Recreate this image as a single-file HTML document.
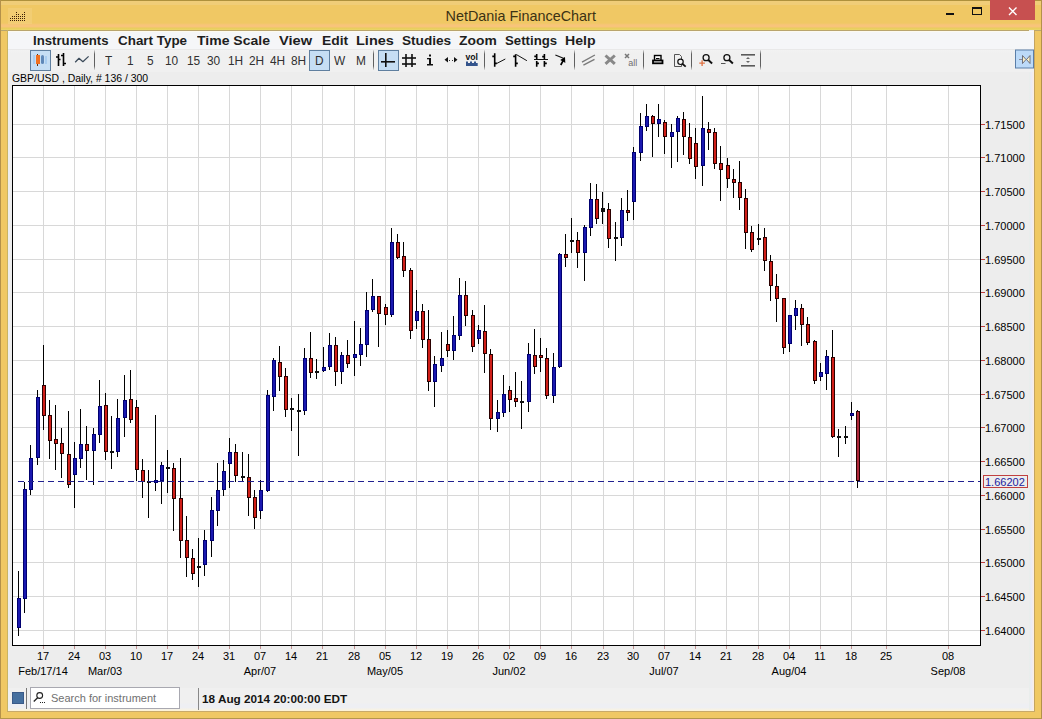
<!DOCTYPE html>
<html><head><meta charset="utf-8">
<style>
html,body{margin:0;padding:0;}
body{width:1042px;height:719px;position:relative;overflow:hidden;background:#f0c864;font-family:"Liberation Sans", sans-serif;}
.abs{position:absolute;}
#client{position:absolute;left:8px;top:31px;width:1026px;height:680px;background:#ededed;}
#menubar{position:absolute;left:8px;top:31px;width:1026px;height:18px;background:#f5f6f8;}
#toolbar{position:absolute;left:8px;top:49px;width:1026px;height:23px;background:linear-gradient(to bottom,#e9e9e9 0px,#e9e9e9 1px,#f2f2f2 1px,#f0f0f0 4px);}
.menu{position:absolute;top:33px;font-weight:bold;font-size:13.3px;line-height:15px;color:#1e1e1e;white-space:nowrap;transform-origin:0 0;}
.tb{position:absolute;top:52.5px;font-size:13.2px;line-height:15px;color:#303030;white-space:nowrap;transform:scaleX(0.9);transform-origin:0 0;}
.yl{position:absolute;left:985px;font-size:11px;color:#000;white-space:nowrap;line-height:14px;}
.xl{position:absolute;top:649px;width:40px;text-align:center;font-size:11px;color:#000;line-height:14px;}
.xl2{position:absolute;top:664px;width:80px;text-align:center;font-size:11px;color:#000;line-height:14px;}
svg{position:absolute;left:0;top:0;}
</style></head><body>
<div class="abs" style="left:0;top:0;width:1042px;height:31px;background:linear-gradient(to bottom,#af913c 0px,#af913c 1px,#f0cd78 1px,#f0cd78 5px,#f0c864 5px,#f0c864 23px,#f8c47a 25px,#f8c47a 27px,#e8cc5a 28px,#ead66a 30px,#b9a56e 30px,#b9a56e 31px);"></div>
<div id="client"></div>
<div class="abs" style="left:0;top:0;width:1px;height:719px;background:#b4914a;"></div>
<div class="abs" style="left:1041px;top:0;width:1px;height:719px;background:#b4914a;"></div>
<div class="abs" style="left:0;top:718px;width:1042px;height:1px;background:#b4964c;"></div>
<div class="abs" style="left:7px;top:30px;width:1px;height:682px;background:#c8b464;"></div>
<div class="abs" style="left:1034px;top:30px;width:1px;height:682px;background:#c4a460;"></div>
<div class="abs" style="left:7px;top:711px;width:1028px;height:1px;background:#c8aa6a;"></div>
<div class="abs" style="left:8px;top:688px;width:1021px;height:22px;background:linear-gradient(to bottom,#f0f0f0 0px,#f0f0f0 15px,#eeeff3 16px,#eeeff3 20px,#f6f2e6 21px);"></div>
<div class="abs" style="left:8px;top:710px;width:1026px;height:1px;background:#fdf3d7;"></div>
<div class="abs" style="left:1029px;top:30px;width:5px;height:680px;background:linear-gradient(to right,#e8eeea,#ecebf5,#fdeee2);"></div>
<div id="menubar"></div>
<div id="toolbar"></div>
<div class="abs" style="left:8px;top:31px;width:1026px;height:1px;background:#fdfaf0;"></div>
<div class="abs" style="left:445.5px;top:8px;font-size:14.4px;line-height:17px;color:#3c3214;white-space:nowrap;">NetDania FinanceChart</div>
<div class="menu" style="left:33.30px;transform:scaleX(0.9932)">Instruments</div>
<div class="menu" style="left:117.70px;transform:scaleX(1.0090)">Chart Type</div>
<div class="menu" style="left:196.70px;transform:scaleX(1.0537)">Time Scale</div>
<div class="menu" style="left:279.30px;transform:scaleX(1.1000)">View</div>
<div class="menu" style="left:321.70px;transform:scaleX(1.0435)">Edit</div>
<div class="menu" style="left:356.30px;transform:scaleX(1.0903)">Lines</div>
<div class="menu" style="left:402.30px;transform:scaleX(1.0244)">Studies</div>
<div class="menu" style="left:458.70px;transform:scaleX(1.0424)">Zoom</div>
<div class="menu" style="left:504.90px;transform:scaleX(0.9940)">Settings</div>
<div class="menu" style="left:564.90px;transform:scaleX(1.0615)">Help</div>
<div class="abs" style="left:12px;top:72px;font-size:10.45px;line-height:13px;color:#000;white-space:nowrap;">GBP/USD , Daily, # 136 / 300</div>
<div class="abs" style="left:12px;top:86px;width:968px;height:559px;background:#fff;"></div>
<svg width="1042" height="719" shape-rendering="crispEdges">
<rect x="43" y="86" width="1" height="559" fill="#d8d8d8"/>
<rect x="74" y="86" width="1" height="559" fill="#d8d8d8"/>
<rect x="105" y="86" width="1" height="559" fill="#d8d8d8"/>
<rect x="136" y="86" width="1" height="559" fill="#d8d8d8"/>
<rect x="167" y="86" width="1" height="559" fill="#d8d8d8"/>
<rect x="198" y="86" width="1" height="559" fill="#d8d8d8"/>
<rect x="229" y="86" width="1" height="559" fill="#d8d8d8"/>
<rect x="260" y="86" width="1" height="559" fill="#d8d8d8"/>
<rect x="291" y="86" width="1" height="559" fill="#d8d8d8"/>
<rect x="322" y="86" width="1" height="559" fill="#d8d8d8"/>
<rect x="354" y="86" width="1" height="559" fill="#d8d8d8"/>
<rect x="385" y="86" width="1" height="559" fill="#d8d8d8"/>
<rect x="416" y="86" width="1" height="559" fill="#d8d8d8"/>
<rect x="447" y="86" width="1" height="559" fill="#d8d8d8"/>
<rect x="478" y="86" width="1" height="559" fill="#d8d8d8"/>
<rect x="509" y="86" width="1" height="559" fill="#d8d8d8"/>
<rect x="540" y="86" width="1" height="559" fill="#d8d8d8"/>
<rect x="571" y="86" width="1" height="559" fill="#d8d8d8"/>
<rect x="603" y="86" width="1" height="559" fill="#d8d8d8"/>
<rect x="633" y="86" width="1" height="559" fill="#d8d8d8"/>
<rect x="664" y="86" width="1" height="559" fill="#d8d8d8"/>
<rect x="695" y="86" width="1" height="559" fill="#d8d8d8"/>
<rect x="726" y="86" width="1" height="559" fill="#d8d8d8"/>
<rect x="758" y="86" width="1" height="559" fill="#d8d8d8"/>
<rect x="789" y="86" width="1" height="559" fill="#d8d8d8"/>
<rect x="820" y="86" width="1" height="559" fill="#d8d8d8"/>
<rect x="851" y="86" width="1" height="559" fill="#d8d8d8"/>
<rect x="886" y="86" width="1" height="559" fill="#d8d8d8"/>
<rect x="948" y="86" width="1" height="559" fill="#d8d8d8"/>
<rect x="13" y="124" width="967" height="1" fill="#d8d8d8"/>
<rect x="13" y="157" width="967" height="1" fill="#d8d8d8"/>
<rect x="13" y="191" width="967" height="1" fill="#d8d8d8"/>
<rect x="13" y="225" width="967" height="1" fill="#d8d8d8"/>
<rect x="13" y="259" width="967" height="1" fill="#d8d8d8"/>
<rect x="13" y="292" width="967" height="1" fill="#d8d8d8"/>
<rect x="13" y="326" width="967" height="1" fill="#d8d8d8"/>
<rect x="13" y="360" width="967" height="1" fill="#d8d8d8"/>
<rect x="13" y="394" width="967" height="1" fill="#d8d8d8"/>
<rect x="13" y="427" width="967" height="1" fill="#d8d8d8"/>
<rect x="13" y="461" width="967" height="1" fill="#d8d8d8"/>
<rect x="13" y="495" width="967" height="1" fill="#d8d8d8"/>
<rect x="13" y="529" width="967" height="1" fill="#d8d8d8"/>
<rect x="13" y="562" width="967" height="1" fill="#d8d8d8"/>
<rect x="13" y="596" width="967" height="1" fill="#d8d8d8"/>
<rect x="13" y="630" width="967" height="1" fill="#d8d8d8"/>
<rect x="18" y="571" width="1" height="65" fill="#000"/>
<rect x="17" y="598" width="4" height="30" fill="#000070"/>
<rect x="18" y="599" width="2" height="28" fill="#1a18b0"/>
<rect x="24" y="482" width="1" height="131" fill="#000"/>
<rect x="23" y="489" width="4" height="110" fill="#000070"/>
<rect x="24" y="490" width="2" height="108" fill="#1a18b0"/>
<rect x="30" y="445" width="1" height="50" fill="#000"/>
<rect x="29" y="458" width="4" height="32" fill="#000070"/>
<rect x="30" y="459" width="2" height="30" fill="#1a18b0"/>
<rect x="37" y="390" width="1" height="75" fill="#000"/>
<rect x="36" y="397" width="4" height="61" fill="#000070"/>
<rect x="37" y="398" width="2" height="59" fill="#1a18b0"/>
<rect x="43" y="345" width="1" height="85" fill="#000"/>
<rect x="42" y="385" width="4" height="31" fill="#2a0000"/>
<rect x="43" y="386" width="2" height="29" fill="#d01e18"/>
<rect x="49" y="400" width="1" height="59" fill="#000"/>
<rect x="48" y="415" width="4" height="26" fill="#2a0000"/>
<rect x="49" y="416" width="2" height="24" fill="#d01e18"/>
<rect x="55" y="405" width="1" height="65" fill="#000"/>
<rect x="54" y="439" width="4" height="5" fill="#2a0000"/>
<rect x="55" y="440" width="2" height="3" fill="#d01e18"/>
<rect x="61" y="428" width="1" height="50" fill="#000"/>
<rect x="60" y="443" width="4" height="11" fill="#2a0000"/>
<rect x="61" y="444" width="2" height="9" fill="#d01e18"/>
<rect x="68" y="411" width="1" height="77" fill="#000"/>
<rect x="67" y="454" width="4" height="31" fill="#2a0000"/>
<rect x="68" y="455" width="2" height="29" fill="#d01e18"/>
<rect x="74" y="442" width="1" height="66" fill="#000"/>
<rect x="73" y="458" width="4" height="17" fill="#000070"/>
<rect x="74" y="459" width="2" height="15" fill="#1a18b0"/>
<rect x="80" y="409" width="1" height="59" fill="#000"/>
<rect x="79" y="444" width="4" height="15" fill="#000070"/>
<rect x="80" y="445" width="2" height="13" fill="#1a18b0"/>
<rect x="86" y="426" width="1" height="54" fill="#000"/>
<rect x="85" y="444" width="4" height="7" fill="#2a0000"/>
<rect x="86" y="445" width="2" height="5" fill="#d01e18"/>
<rect x="93" y="428" width="1" height="57" fill="#000"/>
<rect x="92" y="434" width="4" height="17" fill="#000070"/>
<rect x="93" y="435" width="2" height="15" fill="#1a18b0"/>
<rect x="99" y="380" width="1" height="63" fill="#000"/>
<rect x="98" y="406" width="4" height="29" fill="#000070"/>
<rect x="99" y="407" width="2" height="27" fill="#1a18b0"/>
<rect x="105" y="393" width="1" height="67" fill="#000"/>
<rect x="104" y="405" width="4" height="47" fill="#2a0000"/>
<rect x="105" y="406" width="2" height="45" fill="#d01e18"/>
<rect x="111" y="416" width="1" height="53" fill="#000"/>
<rect x="110" y="451" width="4" height="2" fill="#101010"/>
<rect x="117" y="399" width="1" height="58" fill="#000"/>
<rect x="116" y="418" width="4" height="34" fill="#000070"/>
<rect x="117" y="419" width="2" height="32" fill="#1a18b0"/>
<rect x="124" y="375" width="1" height="62" fill="#000"/>
<rect x="123" y="400" width="4" height="18" fill="#000070"/>
<rect x="124" y="401" width="2" height="16" fill="#1a18b0"/>
<rect x="130" y="370" width="1" height="53" fill="#000"/>
<rect x="129" y="399" width="4" height="21" fill="#2a0000"/>
<rect x="130" y="400" width="2" height="19" fill="#d01e18"/>
<rect x="136" y="400" width="1" height="81" fill="#000"/>
<rect x="135" y="407" width="4" height="63" fill="#2a0000"/>
<rect x="136" y="408" width="2" height="61" fill="#d01e18"/>
<rect x="142" y="459" width="1" height="39" fill="#000"/>
<rect x="141" y="470" width="4" height="12" fill="#2a0000"/>
<rect x="142" y="471" width="2" height="10" fill="#d01e18"/>
<rect x="148" y="470" width="1" height="48" fill="#000"/>
<rect x="147" y="481" width="4" height="2" fill="#101010"/>
<rect x="155" y="415" width="1" height="76" fill="#000"/>
<rect x="154" y="480" width="4" height="3" fill="#000070"/>
<rect x="155" y="481" width="2" height="1" fill="#1a18b0"/>
<rect x="161" y="462" width="1" height="42" fill="#000"/>
<rect x="160" y="465" width="4" height="16" fill="#000070"/>
<rect x="161" y="466" width="2" height="14" fill="#1a18b0"/>
<rect x="167" y="450" width="1" height="43" fill="#000"/>
<rect x="166" y="467" width="4" height="2" fill="#101010"/>
<rect x="173" y="463" width="1" height="68" fill="#000"/>
<rect x="172" y="468" width="4" height="31" fill="#2a0000"/>
<rect x="173" y="469" width="2" height="29" fill="#d01e18"/>
<rect x="180" y="458" width="1" height="100" fill="#000"/>
<rect x="179" y="498" width="4" height="43" fill="#2a0000"/>
<rect x="180" y="499" width="2" height="41" fill="#d01e18"/>
<rect x="186" y="516" width="1" height="61" fill="#000"/>
<rect x="185" y="540" width="4" height="18" fill="#2a0000"/>
<rect x="186" y="541" width="2" height="16" fill="#d01e18"/>
<rect x="192" y="549" width="1" height="31" fill="#000"/>
<rect x="191" y="558" width="4" height="16" fill="#2a0000"/>
<rect x="192" y="559" width="2" height="14" fill="#d01e18"/>
<rect x="198" y="538" width="1" height="49" fill="#000"/>
<rect x="197" y="566" width="4" height="2" fill="#101010"/>
<rect x="204" y="530" width="1" height="46" fill="#000"/>
<rect x="203" y="540" width="4" height="25" fill="#000070"/>
<rect x="204" y="541" width="2" height="23" fill="#1a18b0"/>
<rect x="211" y="497" width="1" height="60" fill="#000"/>
<rect x="210" y="510" width="4" height="31" fill="#000070"/>
<rect x="211" y="511" width="2" height="29" fill="#1a18b0"/>
<rect x="217" y="463" width="1" height="63" fill="#000"/>
<rect x="216" y="490" width="4" height="21" fill="#000070"/>
<rect x="217" y="491" width="2" height="19" fill="#1a18b0"/>
<rect x="223" y="460" width="1" height="36" fill="#000"/>
<rect x="222" y="471" width="4" height="19" fill="#000070"/>
<rect x="223" y="472" width="2" height="17" fill="#1a18b0"/>
<rect x="229" y="438" width="1" height="50" fill="#000"/>
<rect x="228" y="452" width="4" height="12" fill="#000070"/>
<rect x="229" y="453" width="2" height="10" fill="#1a18b0"/>
<rect x="235" y="444" width="1" height="38" fill="#000"/>
<rect x="234" y="452" width="4" height="24" fill="#2a0000"/>
<rect x="235" y="453" width="2" height="22" fill="#d01e18"/>
<rect x="242" y="452" width="1" height="29" fill="#000"/>
<rect x="241" y="476" width="4" height="2" fill="#101010"/>
<rect x="248" y="454" width="1" height="62" fill="#000"/>
<rect x="247" y="477" width="4" height="21" fill="#2a0000"/>
<rect x="248" y="478" width="2" height="19" fill="#d01e18"/>
<rect x="254" y="490" width="1" height="39" fill="#000"/>
<rect x="253" y="497" width="4" height="21" fill="#2a0000"/>
<rect x="254" y="498" width="2" height="19" fill="#d01e18"/>
<rect x="260" y="480" width="1" height="39" fill="#000"/>
<rect x="259" y="490" width="4" height="21" fill="#000070"/>
<rect x="260" y="491" width="2" height="19" fill="#1a18b0"/>
<rect x="267" y="390" width="1" height="102" fill="#000"/>
<rect x="266" y="395" width="4" height="96" fill="#000070"/>
<rect x="267" y="396" width="2" height="94" fill="#1a18b0"/>
<rect x="273" y="358" width="1" height="53" fill="#000"/>
<rect x="272" y="360" width="4" height="37" fill="#000070"/>
<rect x="273" y="361" width="2" height="35" fill="#1a18b0"/>
<rect x="279" y="346" width="1" height="45" fill="#000"/>
<rect x="278" y="362" width="4" height="15" fill="#2a0000"/>
<rect x="279" y="363" width="2" height="13" fill="#d01e18"/>
<rect x="285" y="368" width="1" height="49" fill="#000"/>
<rect x="284" y="376" width="4" height="34" fill="#2a0000"/>
<rect x="285" y="377" width="2" height="32" fill="#d01e18"/>
<rect x="291" y="398" width="1" height="33" fill="#000"/>
<rect x="290" y="408" width="4" height="2" fill="#101010"/>
<rect x="298" y="394" width="1" height="62" fill="#000"/>
<rect x="297" y="410" width="4" height="2" fill="#101010"/>
<rect x="304" y="348" width="1" height="67" fill="#000"/>
<rect x="303" y="358" width="4" height="53" fill="#000070"/>
<rect x="304" y="359" width="2" height="51" fill="#1a18b0"/>
<rect x="310" y="332" width="1" height="46" fill="#000"/>
<rect x="309" y="358" width="4" height="15" fill="#2a0000"/>
<rect x="310" y="359" width="2" height="13" fill="#d01e18"/>
<rect x="316" y="359" width="1" height="20" fill="#000"/>
<rect x="315" y="371" width="4" height="2" fill="#101010"/>
<rect x="323" y="347" width="1" height="25" fill="#000"/>
<rect x="322" y="367" width="4" height="4" fill="#000070"/>
<rect x="323" y="368" width="2" height="2" fill="#1a18b0"/>
<rect x="329" y="333" width="1" height="37" fill="#000"/>
<rect x="328" y="345" width="4" height="22" fill="#000070"/>
<rect x="329" y="346" width="2" height="20" fill="#1a18b0"/>
<rect x="335" y="337" width="1" height="49" fill="#000"/>
<rect x="334" y="345" width="4" height="27" fill="#2a0000"/>
<rect x="335" y="346" width="2" height="25" fill="#d01e18"/>
<rect x="341" y="352" width="1" height="32" fill="#000"/>
<rect x="340" y="355" width="4" height="17" fill="#000070"/>
<rect x="341" y="356" width="2" height="15" fill="#1a18b0"/>
<rect x="347" y="340" width="1" height="28" fill="#000"/>
<rect x="346" y="355" width="4" height="9" fill="#2a0000"/>
<rect x="347" y="356" width="2" height="7" fill="#d01e18"/>
<rect x="354" y="321" width="1" height="55" fill="#000"/>
<rect x="353" y="354" width="4" height="4" fill="#000070"/>
<rect x="354" y="355" width="2" height="2" fill="#1a18b0"/>
<rect x="360" y="328" width="1" height="38" fill="#000"/>
<rect x="359" y="344" width="4" height="11" fill="#000070"/>
<rect x="360" y="345" width="2" height="9" fill="#1a18b0"/>
<rect x="366" y="292" width="1" height="65" fill="#000"/>
<rect x="365" y="310" width="4" height="35" fill="#000070"/>
<rect x="366" y="311" width="2" height="33" fill="#1a18b0"/>
<rect x="372" y="279" width="1" height="33" fill="#000"/>
<rect x="371" y="296" width="4" height="14" fill="#000070"/>
<rect x="372" y="297" width="2" height="12" fill="#1a18b0"/>
<rect x="378" y="296" width="1" height="51" fill="#000"/>
<rect x="377" y="296" width="4" height="18" fill="#2a0000"/>
<rect x="378" y="297" width="2" height="16" fill="#d01e18"/>
<rect x="385" y="304" width="1" height="21" fill="#000"/>
<rect x="384" y="307" width="4" height="8" fill="#2a0000"/>
<rect x="385" y="308" width="2" height="6" fill="#d01e18"/>
<rect x="391" y="228" width="1" height="89" fill="#000"/>
<rect x="390" y="242" width="4" height="73" fill="#000070"/>
<rect x="391" y="243" width="2" height="71" fill="#1a18b0"/>
<rect x="397" y="234" width="1" height="25" fill="#000"/>
<rect x="396" y="242" width="4" height="16" fill="#2a0000"/>
<rect x="397" y="243" width="2" height="14" fill="#d01e18"/>
<rect x="403" y="242" width="1" height="35" fill="#000"/>
<rect x="402" y="256" width="4" height="15" fill="#2a0000"/>
<rect x="403" y="257" width="2" height="13" fill="#d01e18"/>
<rect x="410" y="268" width="1" height="71" fill="#000"/>
<rect x="409" y="270" width="4" height="61" fill="#2a0000"/>
<rect x="410" y="271" width="2" height="59" fill="#d01e18"/>
<rect x="416" y="290" width="1" height="39" fill="#000"/>
<rect x="415" y="311" width="4" height="10" fill="#000070"/>
<rect x="416" y="312" width="2" height="8" fill="#1a18b0"/>
<rect x="422" y="304" width="1" height="44" fill="#000"/>
<rect x="421" y="311" width="4" height="29" fill="#2a0000"/>
<rect x="422" y="312" width="2" height="27" fill="#d01e18"/>
<rect x="428" y="310" width="1" height="81" fill="#000"/>
<rect x="427" y="339" width="4" height="43" fill="#2a0000"/>
<rect x="428" y="340" width="2" height="41" fill="#d01e18"/>
<rect x="434" y="356" width="1" height="51" fill="#000"/>
<rect x="433" y="364" width="4" height="18" fill="#000070"/>
<rect x="434" y="365" width="2" height="16" fill="#1a18b0"/>
<rect x="441" y="332" width="1" height="40" fill="#000"/>
<rect x="440" y="358" width="4" height="8" fill="#000070"/>
<rect x="441" y="359" width="2" height="6" fill="#1a18b0"/>
<rect x="447" y="330" width="1" height="27" fill="#000"/>
<rect x="446" y="344" width="4" height="7" fill="#2a0000"/>
<rect x="447" y="345" width="2" height="5" fill="#d01e18"/>
<rect x="453" y="316" width="1" height="44" fill="#000"/>
<rect x="452" y="335" width="4" height="16" fill="#000070"/>
<rect x="453" y="336" width="2" height="14" fill="#1a18b0"/>
<rect x="459" y="278" width="1" height="62" fill="#000"/>
<rect x="458" y="295" width="4" height="41" fill="#000070"/>
<rect x="459" y="296" width="2" height="39" fill="#1a18b0"/>
<rect x="465" y="281" width="1" height="45" fill="#000"/>
<rect x="464" y="295" width="4" height="21" fill="#2a0000"/>
<rect x="465" y="296" width="2" height="19" fill="#d01e18"/>
<rect x="472" y="310" width="1" height="42" fill="#000"/>
<rect x="471" y="315" width="4" height="32" fill="#2a0000"/>
<rect x="472" y="316" width="2" height="30" fill="#d01e18"/>
<rect x="478" y="325" width="1" height="19" fill="#000"/>
<rect x="477" y="330" width="4" height="9" fill="#000070"/>
<rect x="478" y="331" width="2" height="7" fill="#1a18b0"/>
<rect x="484" y="305" width="1" height="68" fill="#000"/>
<rect x="483" y="331" width="4" height="23" fill="#2a0000"/>
<rect x="484" y="332" width="2" height="21" fill="#d01e18"/>
<rect x="490" y="349" width="1" height="81" fill="#000"/>
<rect x="489" y="354" width="4" height="65" fill="#2a0000"/>
<rect x="490" y="355" width="2" height="63" fill="#d01e18"/>
<rect x="497" y="400" width="1" height="32" fill="#000"/>
<rect x="496" y="412" width="4" height="7" fill="#000070"/>
<rect x="497" y="413" width="2" height="5" fill="#1a18b0"/>
<rect x="503" y="375" width="1" height="42" fill="#000"/>
<rect x="502" y="394" width="4" height="19" fill="#000070"/>
<rect x="503" y="395" width="2" height="17" fill="#1a18b0"/>
<rect x="509" y="386" width="1" height="26" fill="#000"/>
<rect x="508" y="390" width="4" height="10" fill="#2a0000"/>
<rect x="509" y="391" width="2" height="8" fill="#d01e18"/>
<rect x="515" y="372" width="1" height="35" fill="#000"/>
<rect x="514" y="398" width="4" height="4" fill="#2a0000"/>
<rect x="515" y="399" width="2" height="2" fill="#d01e18"/>
<rect x="521" y="381" width="1" height="48" fill="#000"/>
<rect x="520" y="401" width="4" height="2" fill="#101010"/>
<rect x="528" y="343" width="1" height="69" fill="#000"/>
<rect x="527" y="354" width="4" height="48" fill="#000070"/>
<rect x="528" y="355" width="2" height="46" fill="#1a18b0"/>
<rect x="534" y="329" width="1" height="45" fill="#000"/>
<rect x="533" y="355" width="4" height="12" fill="#2a0000"/>
<rect x="534" y="356" width="2" height="10" fill="#d01e18"/>
<rect x="540" y="338" width="1" height="34" fill="#000"/>
<rect x="539" y="355" width="4" height="3" fill="#2a0000"/>
<rect x="540" y="356" width="2" height="1" fill="#d01e18"/>
<rect x="546" y="348" width="1" height="51" fill="#000"/>
<rect x="545" y="358" width="4" height="38" fill="#2a0000"/>
<rect x="546" y="359" width="2" height="36" fill="#d01e18"/>
<rect x="553" y="353" width="1" height="50" fill="#000"/>
<rect x="552" y="367" width="4" height="29" fill="#000070"/>
<rect x="553" y="368" width="2" height="27" fill="#1a18b0"/>
<rect x="559" y="253" width="1" height="115" fill="#000"/>
<rect x="558" y="254" width="4" height="113" fill="#000070"/>
<rect x="559" y="255" width="2" height="111" fill="#1a18b0"/>
<rect x="565" y="234" width="1" height="33" fill="#000"/>
<rect x="564" y="254" width="4" height="4" fill="#2a0000"/>
<rect x="565" y="255" width="2" height="2" fill="#d01e18"/>
<rect x="571" y="218" width="1" height="35" fill="#000"/>
<rect x="570" y="240" width="4" height="2" fill="#101010"/>
<rect x="577" y="232" width="1" height="36" fill="#000"/>
<rect x="576" y="240" width="4" height="13" fill="#2a0000"/>
<rect x="577" y="241" width="2" height="11" fill="#d01e18"/>
<rect x="584" y="225" width="1" height="56" fill="#000"/>
<rect x="583" y="227" width="4" height="26" fill="#000070"/>
<rect x="584" y="228" width="2" height="24" fill="#1a18b0"/>
<rect x="590" y="183" width="1" height="53" fill="#000"/>
<rect x="589" y="199" width="4" height="29" fill="#000070"/>
<rect x="590" y="200" width="2" height="27" fill="#1a18b0"/>
<rect x="596" y="184" width="1" height="40" fill="#000"/>
<rect x="595" y="199" width="4" height="20" fill="#2a0000"/>
<rect x="596" y="200" width="2" height="18" fill="#d01e18"/>
<rect x="602" y="192" width="1" height="32" fill="#000"/>
<rect x="601" y="208" width="4" height="4" fill="#101010"/>
<rect x="608" y="203" width="1" height="45" fill="#000"/>
<rect x="607" y="209" width="4" height="30" fill="#2a0000"/>
<rect x="608" y="210" width="2" height="28" fill="#d01e18"/>
<rect x="615" y="222" width="1" height="39" fill="#000"/>
<rect x="614" y="237" width="4" height="2" fill="#101010"/>
<rect x="621" y="198" width="1" height="48" fill="#000"/>
<rect x="620" y="210" width="4" height="28" fill="#000070"/>
<rect x="621" y="211" width="2" height="26" fill="#1a18b0"/>
<rect x="627" y="190" width="1" height="31" fill="#000"/>
<rect x="626" y="210" width="4" height="3" fill="#2a0000"/>
<rect x="627" y="211" width="2" height="1" fill="#d01e18"/>
<rect x="633" y="147" width="1" height="73" fill="#000"/>
<rect x="632" y="152" width="4" height="50" fill="#000070"/>
<rect x="633" y="153" width="2" height="48" fill="#1a18b0"/>
<rect x="640" y="113" width="1" height="48" fill="#000"/>
<rect x="639" y="126" width="4" height="27" fill="#000070"/>
<rect x="640" y="127" width="2" height="25" fill="#1a18b0"/>
<rect x="646" y="104" width="1" height="27" fill="#000"/>
<rect x="645" y="116" width="4" height="11" fill="#000070"/>
<rect x="646" y="117" width="2" height="9" fill="#1a18b0"/>
<rect x="652" y="115" width="1" height="42" fill="#000"/>
<rect x="651" y="116" width="4" height="8" fill="#2a0000"/>
<rect x="652" y="117" width="2" height="6" fill="#d01e18"/>
<rect x="658" y="104" width="1" height="33" fill="#000"/>
<rect x="657" y="119" width="4" height="5" fill="#000070"/>
<rect x="658" y="120" width="2" height="3" fill="#1a18b0"/>
<rect x="664" y="120" width="1" height="34" fill="#000"/>
<rect x="663" y="122" width="4" height="15" fill="#2a0000"/>
<rect x="664" y="123" width="2" height="13" fill="#d01e18"/>
<rect x="671" y="124" width="1" height="44" fill="#000"/>
<rect x="670" y="132" width="4" height="5" fill="#000070"/>
<rect x="671" y="133" width="2" height="3" fill="#1a18b0"/>
<rect x="677" y="116" width="1" height="46" fill="#000"/>
<rect x="676" y="118" width="4" height="14" fill="#000070"/>
<rect x="677" y="119" width="2" height="12" fill="#1a18b0"/>
<rect x="683" y="112" width="1" height="43" fill="#000"/>
<rect x="682" y="119" width="4" height="18" fill="#2a0000"/>
<rect x="683" y="120" width="2" height="16" fill="#d01e18"/>
<rect x="689" y="123" width="1" height="41" fill="#000"/>
<rect x="688" y="137" width="4" height="22" fill="#2a0000"/>
<rect x="689" y="138" width="2" height="20" fill="#d01e18"/>
<rect x="695" y="128" width="1" height="51" fill="#000"/>
<rect x="694" y="143" width="4" height="24" fill="#2a0000"/>
<rect x="695" y="144" width="2" height="22" fill="#d01e18"/>
<rect x="702" y="96" width="1" height="90" fill="#000"/>
<rect x="701" y="128" width="4" height="38" fill="#000070"/>
<rect x="702" y="129" width="2" height="36" fill="#1a18b0"/>
<rect x="708" y="122" width="1" height="28" fill="#000"/>
<rect x="707" y="129" width="4" height="4" fill="#2a0000"/>
<rect x="708" y="130" width="2" height="2" fill="#d01e18"/>
<rect x="714" y="128" width="1" height="41" fill="#000"/>
<rect x="713" y="132" width="4" height="32" fill="#2a0000"/>
<rect x="714" y="133" width="2" height="30" fill="#d01e18"/>
<rect x="720" y="146" width="1" height="55" fill="#000"/>
<rect x="719" y="163" width="4" height="7" fill="#2a0000"/>
<rect x="720" y="164" width="2" height="5" fill="#d01e18"/>
<rect x="727" y="158" width="1" height="30" fill="#000"/>
<rect x="726" y="165" width="4" height="14" fill="#2a0000"/>
<rect x="727" y="166" width="2" height="12" fill="#d01e18"/>
<rect x="733" y="169" width="1" height="29" fill="#000"/>
<rect x="732" y="179" width="4" height="4" fill="#2a0000"/>
<rect x="733" y="180" width="2" height="2" fill="#d01e18"/>
<rect x="739" y="161" width="1" height="49" fill="#000"/>
<rect x="738" y="182" width="4" height="16" fill="#2a0000"/>
<rect x="739" y="183" width="2" height="14" fill="#d01e18"/>
<rect x="745" y="189" width="1" height="60" fill="#000"/>
<rect x="744" y="198" width="4" height="35" fill="#2a0000"/>
<rect x="745" y="199" width="2" height="33" fill="#d01e18"/>
<rect x="751" y="226" width="1" height="26" fill="#000"/>
<rect x="750" y="232" width="4" height="18" fill="#2a0000"/>
<rect x="751" y="233" width="2" height="16" fill="#d01e18"/>
<rect x="758" y="224" width="1" height="21" fill="#000"/>
<rect x="757" y="238" width="4" height="2" fill="#101010"/>
<rect x="764" y="228" width="1" height="43" fill="#000"/>
<rect x="763" y="237" width="4" height="24" fill="#2a0000"/>
<rect x="764" y="238" width="2" height="22" fill="#d01e18"/>
<rect x="770" y="255" width="1" height="46" fill="#000"/>
<rect x="769" y="261" width="4" height="25" fill="#2a0000"/>
<rect x="770" y="262" width="2" height="23" fill="#d01e18"/>
<rect x="776" y="274" width="1" height="48" fill="#000"/>
<rect x="775" y="286" width="4" height="13" fill="#2a0000"/>
<rect x="776" y="287" width="2" height="11" fill="#d01e18"/>
<rect x="783" y="298" width="1" height="56" fill="#000"/>
<rect x="782" y="298" width="4" height="50" fill="#2a0000"/>
<rect x="783" y="299" width="2" height="48" fill="#d01e18"/>
<rect x="789" y="315" width="1" height="37" fill="#000"/>
<rect x="788" y="315" width="4" height="29" fill="#000070"/>
<rect x="789" y="316" width="2" height="27" fill="#1a18b0"/>
<rect x="795" y="300" width="1" height="30" fill="#000"/>
<rect x="794" y="308" width="4" height="8" fill="#000070"/>
<rect x="795" y="309" width="2" height="6" fill="#1a18b0"/>
<rect x="801" y="304" width="1" height="42" fill="#000"/>
<rect x="800" y="308" width="4" height="17" fill="#2a0000"/>
<rect x="801" y="309" width="2" height="15" fill="#d01e18"/>
<rect x="807" y="317" width="1" height="28" fill="#000"/>
<rect x="806" y="324" width="4" height="19" fill="#2a0000"/>
<rect x="807" y="325" width="2" height="17" fill="#d01e18"/>
<rect x="814" y="340" width="1" height="44" fill="#000"/>
<rect x="813" y="341" width="4" height="40" fill="#2a0000"/>
<rect x="814" y="342" width="2" height="38" fill="#d01e18"/>
<rect x="820" y="363" width="1" height="18" fill="#000"/>
<rect x="819" y="372" width="4" height="5" fill="#000070"/>
<rect x="820" y="373" width="2" height="3" fill="#1a18b0"/>
<rect x="826" y="350" width="1" height="40" fill="#000"/>
<rect x="825" y="356" width="4" height="18" fill="#000070"/>
<rect x="826" y="357" width="2" height="16" fill="#1a18b0"/>
<rect x="832" y="330" width="1" height="108" fill="#000"/>
<rect x="831" y="357" width="4" height="80" fill="#2a0000"/>
<rect x="832" y="358" width="2" height="78" fill="#d01e18"/>
<rect x="838" y="429" width="1" height="28" fill="#000"/>
<rect x="837" y="436" width="4" height="2" fill="#101010"/>
<rect x="845" y="426" width="1" height="18" fill="#000"/>
<rect x="844" y="436" width="4" height="2" fill="#101010"/>
<rect x="851" y="402" width="1" height="18" fill="#000"/>
<rect x="850" y="413" width="4" height="3" fill="#000070"/>
<rect x="851" y="414" width="2" height="1" fill="#1a18b0"/>
<rect x="857" y="410" width="1" height="78" fill="#000"/>
<rect x="856" y="411" width="4" height="70" fill="#2a0000"/>
<rect x="857" y="412" width="2" height="68" fill="#b0283a"/>
<rect x="18" y="481" width="6" height="1" fill="#202090"/>
<rect x="28" y="481" width="6" height="1" fill="#202090"/>
<rect x="38" y="481" width="6" height="1" fill="#202090"/>
<rect x="48" y="481" width="6" height="1" fill="#202090"/>
<rect x="58" y="481" width="6" height="1" fill="#202090"/>
<rect x="68" y="481" width="6" height="1" fill="#202090"/>
<rect x="78" y="481" width="6" height="1" fill="#202090"/>
<rect x="88" y="481" width="6" height="1" fill="#202090"/>
<rect x="98" y="481" width="6" height="1" fill="#202090"/>
<rect x="108" y="481" width="6" height="1" fill="#202090"/>
<rect x="118" y="481" width="6" height="1" fill="#202090"/>
<rect x="128" y="481" width="6" height="1" fill="#202090"/>
<rect x="138" y="481" width="6" height="1" fill="#202090"/>
<rect x="148" y="481" width="6" height="1" fill="#202090"/>
<rect x="158" y="481" width="6" height="1" fill="#202090"/>
<rect x="168" y="481" width="6" height="1" fill="#202090"/>
<rect x="178" y="481" width="6" height="1" fill="#202090"/>
<rect x="188" y="481" width="6" height="1" fill="#202090"/>
<rect x="198" y="481" width="6" height="1" fill="#202090"/>
<rect x="208" y="481" width="6" height="1" fill="#202090"/>
<rect x="218" y="481" width="6" height="1" fill="#202090"/>
<rect x="228" y="481" width="6" height="1" fill="#202090"/>
<rect x="238" y="481" width="6" height="1" fill="#202090"/>
<rect x="248" y="481" width="6" height="1" fill="#202090"/>
<rect x="258" y="481" width="6" height="1" fill="#202090"/>
<rect x="268" y="481" width="6" height="1" fill="#202090"/>
<rect x="278" y="481" width="6" height="1" fill="#202090"/>
<rect x="288" y="481" width="6" height="1" fill="#202090"/>
<rect x="298" y="481" width="6" height="1" fill="#202090"/>
<rect x="308" y="481" width="6" height="1" fill="#202090"/>
<rect x="318" y="481" width="6" height="1" fill="#202090"/>
<rect x="328" y="481" width="6" height="1" fill="#202090"/>
<rect x="338" y="481" width="6" height="1" fill="#202090"/>
<rect x="348" y="481" width="6" height="1" fill="#202090"/>
<rect x="358" y="481" width="6" height="1" fill="#202090"/>
<rect x="368" y="481" width="6" height="1" fill="#202090"/>
<rect x="378" y="481" width="6" height="1" fill="#202090"/>
<rect x="388" y="481" width="6" height="1" fill="#202090"/>
<rect x="398" y="481" width="6" height="1" fill="#202090"/>
<rect x="408" y="481" width="6" height="1" fill="#202090"/>
<rect x="418" y="481" width="6" height="1" fill="#202090"/>
<rect x="428" y="481" width="6" height="1" fill="#202090"/>
<rect x="438" y="481" width="6" height="1" fill="#202090"/>
<rect x="448" y="481" width="6" height="1" fill="#202090"/>
<rect x="458" y="481" width="6" height="1" fill="#202090"/>
<rect x="468" y="481" width="6" height="1" fill="#202090"/>
<rect x="478" y="481" width="6" height="1" fill="#202090"/>
<rect x="488" y="481" width="6" height="1" fill="#202090"/>
<rect x="498" y="481" width="6" height="1" fill="#202090"/>
<rect x="508" y="481" width="6" height="1" fill="#202090"/>
<rect x="518" y="481" width="6" height="1" fill="#202090"/>
<rect x="528" y="481" width="6" height="1" fill="#202090"/>
<rect x="538" y="481" width="6" height="1" fill="#202090"/>
<rect x="548" y="481" width="6" height="1" fill="#202090"/>
<rect x="558" y="481" width="6" height="1" fill="#202090"/>
<rect x="568" y="481" width="6" height="1" fill="#202090"/>
<rect x="578" y="481" width="6" height="1" fill="#202090"/>
<rect x="588" y="481" width="6" height="1" fill="#202090"/>
<rect x="598" y="481" width="6" height="1" fill="#202090"/>
<rect x="608" y="481" width="6" height="1" fill="#202090"/>
<rect x="618" y="481" width="6" height="1" fill="#202090"/>
<rect x="628" y="481" width="6" height="1" fill="#202090"/>
<rect x="638" y="481" width="6" height="1" fill="#202090"/>
<rect x="648" y="481" width="6" height="1" fill="#202090"/>
<rect x="658" y="481" width="6" height="1" fill="#202090"/>
<rect x="668" y="481" width="6" height="1" fill="#202090"/>
<rect x="678" y="481" width="6" height="1" fill="#202090"/>
<rect x="688" y="481" width="6" height="1" fill="#202090"/>
<rect x="698" y="481" width="6" height="1" fill="#202090"/>
<rect x="708" y="481" width="6" height="1" fill="#202090"/>
<rect x="718" y="481" width="6" height="1" fill="#202090"/>
<rect x="728" y="481" width="6" height="1" fill="#202090"/>
<rect x="738" y="481" width="6" height="1" fill="#202090"/>
<rect x="748" y="481" width="6" height="1" fill="#202090"/>
<rect x="758" y="481" width="6" height="1" fill="#202090"/>
<rect x="768" y="481" width="6" height="1" fill="#202090"/>
<rect x="778" y="481" width="6" height="1" fill="#202090"/>
<rect x="788" y="481" width="6" height="1" fill="#202090"/>
<rect x="798" y="481" width="6" height="1" fill="#202090"/>
<rect x="808" y="481" width="6" height="1" fill="#202090"/>
<rect x="818" y="481" width="6" height="1" fill="#202090"/>
<rect x="828" y="481" width="6" height="1" fill="#202090"/>
<rect x="838" y="481" width="6" height="1" fill="#202090"/>
<rect x="848" y="481" width="6" height="1" fill="#202090"/>
<rect x="858" y="481" width="6" height="1" fill="#202090"/>
<rect x="868" y="481" width="6" height="1" fill="#202090"/>
<rect x="878" y="481" width="6" height="1" fill="#202090"/>
<rect x="888" y="481" width="6" height="1" fill="#202090"/>
<rect x="898" y="481" width="6" height="1" fill="#202090"/>
<rect x="908" y="481" width="6" height="1" fill="#202090"/>
<rect x="918" y="481" width="6" height="1" fill="#202090"/>
<rect x="928" y="481" width="6" height="1" fill="#202090"/>
<rect x="938" y="481" width="6" height="1" fill="#202090"/>
<rect x="948" y="481" width="6" height="1" fill="#202090"/>
<rect x="958" y="481" width="6" height="1" fill="#202090"/>
<rect x="968" y="481" width="6" height="1" fill="#202090"/>
<rect x="978" y="481" width="2" height="1" fill="#202090"/>
<rect x="12" y="85" width="969" height="1" fill="#000"/>
<rect x="12" y="645" width="969" height="1" fill="#000"/>
<rect x="12" y="85" width="1" height="561" fill="#000"/>
<rect x="980" y="85" width="1" height="561" fill="#000"/>
<rect x="981" y="124" width="4" height="1" fill="#c04040"/>
<rect x="981" y="157" width="4" height="1" fill="#c04040"/>
<rect x="981" y="191" width="4" height="1" fill="#c04040"/>
<rect x="981" y="225" width="4" height="1" fill="#c04040"/>
<rect x="981" y="259" width="4" height="1" fill="#c04040"/>
<rect x="981" y="292" width="4" height="1" fill="#c04040"/>
<rect x="981" y="326" width="4" height="1" fill="#c04040"/>
<rect x="981" y="360" width="4" height="1" fill="#c04040"/>
<rect x="981" y="394" width="4" height="1" fill="#c04040"/>
<rect x="981" y="427" width="4" height="1" fill="#c04040"/>
<rect x="981" y="461" width="4" height="1" fill="#c04040"/>
<rect x="981" y="495" width="4" height="1" fill="#c04040"/>
<rect x="981" y="529" width="4" height="1" fill="#c04040"/>
<rect x="981" y="562" width="4" height="1" fill="#c04040"/>
<rect x="981" y="596" width="4" height="1" fill="#c04040"/>
<rect x="981" y="630" width="4" height="1" fill="#c04040"/>
<rect x="43" y="646" width="1" height="3" fill="#c09090"/>
<rect x="74" y="646" width="1" height="3" fill="#c09090"/>
<rect x="105" y="646" width="1" height="3" fill="#c09090"/>
<rect x="136" y="646" width="1" height="3" fill="#c09090"/>
<rect x="167" y="646" width="1" height="3" fill="#c09090"/>
<rect x="198" y="646" width="1" height="3" fill="#c09090"/>
<rect x="229" y="646" width="1" height="3" fill="#c09090"/>
<rect x="260" y="646" width="1" height="3" fill="#c09090"/>
<rect x="291" y="646" width="1" height="3" fill="#c09090"/>
<rect x="322" y="646" width="1" height="3" fill="#c09090"/>
<rect x="354" y="646" width="1" height="3" fill="#c09090"/>
<rect x="385" y="646" width="1" height="3" fill="#c09090"/>
<rect x="416" y="646" width="1" height="3" fill="#c09090"/>
<rect x="447" y="646" width="1" height="3" fill="#c09090"/>
<rect x="478" y="646" width="1" height="3" fill="#c09090"/>
<rect x="509" y="646" width="1" height="3" fill="#c09090"/>
<rect x="540" y="646" width="1" height="3" fill="#c09090"/>
<rect x="571" y="646" width="1" height="3" fill="#c09090"/>
<rect x="603" y="646" width="1" height="3" fill="#c09090"/>
<rect x="633" y="646" width="1" height="3" fill="#c09090"/>
<rect x="664" y="646" width="1" height="3" fill="#c09090"/>
<rect x="695" y="646" width="1" height="3" fill="#c09090"/>
<rect x="726" y="646" width="1" height="3" fill="#c09090"/>
<rect x="758" y="646" width="1" height="3" fill="#c09090"/>
<rect x="789" y="646" width="1" height="3" fill="#c09090"/>
<rect x="820" y="646" width="1" height="3" fill="#c09090"/>
<rect x="851" y="646" width="1" height="3" fill="#c09090"/>
<rect x="886" y="646" width="1" height="3" fill="#c09090"/>
<rect x="948" y="646" width="1" height="3" fill="#c09090"/>
</svg>
<svg width="1042" height="719">
<defs><linearGradient id="sg" x1="0" y1="0" x2="0" y2="1"><stop offset="0" stop-color="#e0e0e0"/><stop offset="0.2" stop-color="#606060"/><stop offset="0.8" stop-color="#606060"/><stop offset="1" stop-color="#e0e0e0"/></linearGradient></defs>
<rect x="30.5" y="50.5" width="20" height="20" fill="#c6def4" stroke="#5f7f9f" stroke-width="1"/>
<rect x="309.5" y="50.5" width="20" height="20" fill="#c6def4" stroke="#5f7f9f" stroke-width="1"/>
<rect x="378.5" y="50.5" width="20" height="20" fill="#c6def4" stroke="#5f7f9f" stroke-width="1"/>
<rect x="33" y="55" width="2" height="9" fill="#a9cdf0"/>
<rect x="45" y="56" width="2" height="8" fill="#a9cdf0"/>
<rect x="37" y="54" width="1" height="12" fill="#5a3010"/>
<rect x="36" y="55" width="4" height="9" fill="#f07020"/>
<rect x="41" y="55" width="3" height="9" rx="1.5" fill="#5f88b8"/>
<path d="M58.5 54v12 M56 57h2.5 M58.5 59.5h2 M63.5 53v13 M61 55.5h2.5 M63.5 63.5h2.5" stroke="#000" stroke-width="1.6" fill="none"/>
<path d="M75.2 62.2 L79 58.3 L82.9 61.7 L88.6 56.4" stroke="#3c4b5a" stroke-width="1.25" fill="none" stroke-linejoin="round"/>
<rect x="94" y="50" width="1" height="20" fill="url(#sg)"/>
<rect x="373" y="50" width="1" height="20" fill="url(#sg)"/>
<rect x="381" y="61" width="14" height="1.6" fill="#111"/>
<rect x="385" y="53" width="1.6" height="14" fill="#111"/>
<rect x="405.2" y="54" width="1.6" height="13" fill="#111"/><rect x="411.2" y="54" width="1.6" height="13" fill="#111"/>
<rect x="402" y="57.2" width="14" height="1.6" fill="#111"/><rect x="402" y="63.2" width="14" height="1.6" fill="#111"/>
<rect x="429" y="54.5" width="2" height="2" fill="#111"/><rect x="429" y="58" width="2" height="7" fill="#111"/><rect x="427" y="58" width="3" height="1.3" fill="#111"/><rect x="427" y="64" width="6" height="1.5" fill="#111"/>
<path d="M444.5 59.7 L448 57 L448 62.4Z M457.5 59.7 L454 57 L454 62.4Z" fill="#111"/><rect x="449" y="60" width="1" height="1" fill="#333"/><rect x="452" y="60" width="1" height="1" fill="#333"/>
<text x="465.5" y="59.8" font-family="Liberation Sans" font-weight="bold" font-size="9.5" fill="#111" textLength="12.5" lengthAdjust="spacingAndGlyphs">vol</text>
<path d="M466 61.5h2v1.5h2v-1.5h2v1.5h2v-1.5h2v1.5h1.7v3H466Z" fill="#34548c"/>
<rect x="484" y="50" width="1" height="20" fill="url(#sg)"/>
<path d="M494.7 53.3v13.4 M492.3 56.4h2.4 M494.7 63.4h2.2" stroke="#000" stroke-width="1.6" fill="none"/><path d="M496.9 63.4 L505.3 59" stroke="#111" stroke-width="1" fill="none"/>
<path d="M515.6 54.2v12.5 M513.2 56.4h2.4 M515.6 63.4h2.2" stroke="#000" stroke-width="1.6" fill="none"/><path d="M516.3 54.5 L526.9 60.7" stroke="#111" stroke-width="1" fill="none"/>
<path d="M536.7 54v5.3 M536.7 61v5.7 M534.3 56.4h2.4 M536.7 63.4h2.2 M544.4 54v5.3 M544.4 61v5.7 M542.2 56.6h2.2 M544.4 63.4h2.4" stroke="#000" stroke-width="1.6" fill="none"/><rect x="534" y="59" width="14" height="1" fill="#111"/>
<path d="M555.4 55 L564 58.5" stroke="#111" stroke-width="1.1" fill="none"/><path d="M565 57 L565.3 63 L563.5 61.8 L561.5 65.5 L560 64.6 L562 61 L560.2 60Z" fill="#000"/>
<rect x="574" y="50" width="1" height="20" fill="url(#sg)"/>
<path d="M582 62.1 L594.9 55 M583.4 65.1 L594.5 59.4" stroke="#7a7a7a" stroke-width="1.4" fill="none"/>
<path d="M605.5 55.5 L614.8 63.8 M614.8 55.5 L605.5 63.8" stroke="#888" stroke-width="3" fill="none"/>
<path d="M625 54 L629 58 M629 54 L625 58" stroke="#777" stroke-width="1.5" fill="none"/>
<text x="628.3" y="65.8" font-family="Liberation Sans" font-size="8.5" fill="#6e6e6e" textLength="9" lengthAdjust="spacingAndGlyphs">all</text>
<rect x="643" y="50" width="1" height="20" fill="url(#sg)"/>
<rect x="654.5" y="55.5" width="6.5" height="5" stroke="#000" stroke-width="1.4" fill="#fff"/><rect x="656" y="58" width="3.5" height="1" fill="#000"/><rect x="653" y="60.5" width="9.5" height="2.8" stroke="#000" stroke-width="1.8" fill="#fff"/>
<path d="M674.5 54.5 H679.5 L681.5 56.5 V66.5 H674.5Z" stroke="#555" stroke-width="1" fill="none"/><circle cx="680.5" cy="61.8" r="2.7" stroke="#111" stroke-width="1.2" fill="#f4f4f4"/><path d="M682.3 63.7 L685.7 66.6" stroke="#111" stroke-width="1.8" fill="none"/>
<rect x="691" y="50" width="1" height="20" fill="url(#sg)"/>
<circle cx="706.1" cy="57.7" r="3" stroke="#111" stroke-width="1.3" fill="none"/><path d="M708.1 59.8 L712.1 63.4" stroke="#111" stroke-width="2" fill="none"/><path d="M699.3 63.1h5.6 M702.1 60.3v5.6" stroke="#e07040" stroke-width="1.3" fill="none"/>
<circle cx="726.9" cy="57.7" r="3" stroke="#111" stroke-width="1.3" fill="none"/><path d="M728.9 59.8 L732.9 63.4" stroke="#111" stroke-width="2" fill="none"/><rect x="721" y="63" width="4.5" height="1" fill="#555"/>
<rect x="741" y="54" width="14" height="1.6" fill="#5a5a5a"/><rect x="741" y="65" width="14" height="1.6" fill="#5a5a5a"/><path d="M746 59h4l-2-2z M746 61h4l-2 2z" fill="#666"/>
<rect x="760" y="50" width="1" height="20" fill="url(#sg)"/>
<rect x="1015.5" y="50" width="18" height="18" fill="#bcdaf8" stroke="#5a7ea8" stroke-width="1"/>
<path d="M1022.5 55.5 L1026 59.5 L1022.5 63.5Z M1030 55.5 L1026.5 59.5 L1030 63.5Z" fill="#f8f0c8" stroke="#556" stroke-width="0.8"/><rect x="1019" y="59" width="3" height="1" fill="#889"/>
<rect x="8" y="8" width="24" height="16" fill="#f8dc98" opacity="0.3"/>
<rect x="16" y="12" width="1" height="1" fill="#3c2008"/>
<rect x="24" y="12" width="1" height="1" fill="#3c2008"/>
<rect x="16" y="14" width="1" height="1" fill="#3c2008"/>
<rect x="18" y="14" width="1" height="1" fill="#3c2008"/>
<rect x="22" y="14" width="1" height="1" fill="#3c2008"/>
<rect x="24" y="14" width="1" height="1" fill="#3c2008"/>
<rect x="12" y="16" width="1" height="1" fill="#3c2008"/>
<rect x="14" y="16" width="1" height="1" fill="#3c2008"/>
<rect x="16" y="16" width="1" height="1" fill="#3c2008"/>
<rect x="18" y="16" width="1" height="1" fill="#3c2008"/>
<rect x="20" y="16" width="1" height="1" fill="#3c2008"/>
<rect x="22" y="16" width="1" height="1" fill="#3c2008"/>
<rect x="24" y="16" width="1" height="1" fill="#3c2008"/>
<rect x="10" y="18" width="1" height="1" fill="#3c2008"/>
<rect x="12" y="18" width="1" height="1" fill="#3c2008"/>
<rect x="14" y="18" width="1" height="1" fill="#3c2008"/>
<rect x="16" y="18" width="1" height="1" fill="#3c2008"/>
<rect x="18" y="18" width="1" height="1" fill="#3c2008"/>
<rect x="20" y="18" width="1" height="1" fill="#3c2008"/>
<rect x="22" y="18" width="1" height="1" fill="#3c2008"/>
<rect x="24" y="18" width="1" height="1" fill="#3c2008"/>
<rect x="10" y="20" width="1" height="1" fill="#3c2008"/>
<rect x="12" y="20" width="1" height="1" fill="#3c2008"/>
<rect x="14" y="20" width="1" height="1" fill="#3c2008"/>
<rect x="16" y="20" width="1" height="1" fill="#3c2008"/>
<rect x="18" y="20" width="1" height="1" fill="#3c2008"/>
<rect x="20" y="20" width="1" height="1" fill="#3c2008"/>
<rect x="22" y="20" width="1" height="1" fill="#3c2008"/>
<rect x="24" y="20" width="1" height="1" fill="#3c2008"/>
<rect x="946" y="13" width="8" height="2" fill="#111"/>
<rect x="972.5" y="7.5" width="9" height="7" stroke="#111" stroke-width="1" fill="none"/><rect x="972" y="7" width="10" height="2" fill="#111"/>
<rect x="990" y="0" width="45" height="20" fill="#c75050"/>
<path d="M1009 7.5 L1016.5 15 M1016.5 7.5 L1009 15" stroke="#fff" stroke-width="1.4" fill="none"/>
<rect x="12.5" y="692.5" width="11" height="11" fill="#46709f" stroke="#3a5a88" stroke-width="1"/>
<rect x="26" y="688" width="1" height="21" fill="#777"/>
<rect x="30.5" y="687.5" width="149" height="21" fill="#fff" stroke="#a8a8b0" stroke-width="1"/>
<circle cx="39.7" cy="695.5" r="2.9" stroke="#222" stroke-width="1.1" fill="none"/><path d="M37.6 697.7 L33.8 701.5" stroke="#222" stroke-width="1.3" fill="none"/><rect x="40" y="702" width="1" height="1" fill="#222"/><rect x="42" y="702" width="1" height="1" fill="#222"/><rect x="44" y="702" width="1" height="1" fill="#222"/>
<rect x="198" y="688" width="1" height="22" fill="#888"/>
</svg>
<div class="tb" style="left:104.6px">T</div>
<div class="tb" style="left:127.4px">1</div>
<div class="tb" style="left:146.9px">5</div>
<div class="tb" style="left:165.4px">10</div>
<div class="tb" style="left:186.6px">15</div>
<div class="tb" style="left:207.4px">30</div>
<div class="tb" style="left:228.1px">1H</div>
<div class="tb" style="left:248.8px">2H</div>
<div class="tb" style="left:269.9px">4H</div>
<div class="tb" style="left:291.0px">8H</div>
<div class="tb" style="left:315.2px">D</div>
<div class="tb" style="left:333.9px">W</div>
<div class="tb" style="left:355.8px">M</div>
<div class="yl" style="top:118px">1.71500</div>
<div class="yl" style="top:151px">1.71000</div>
<div class="yl" style="top:185px">1.70500</div>
<div class="yl" style="top:219px">1.70000</div>
<div class="yl" style="top:253px">1.69500</div>
<div class="yl" style="top:286px">1.69000</div>
<div class="yl" style="top:320px">1.68500</div>
<div class="yl" style="top:354px">1.68000</div>
<div class="yl" style="top:388px">1.67500</div>
<div class="yl" style="top:421px">1.67000</div>
<div class="yl" style="top:455px">1.66500</div>
<div class="yl" style="top:489px">1.66000</div>
<div class="yl" style="top:523px">1.65500</div>
<div class="yl" style="top:556px">1.65000</div>
<div class="yl" style="top:590px">1.64500</div>
<div class="yl" style="top:624px">1.64000</div>
<div class="xl" style="left:23px">17</div>
<div class="xl" style="left:54px">24</div>
<div class="xl" style="left:85px">03</div>
<div class="xl" style="left:116px">10</div>
<div class="xl" style="left:147px">17</div>
<div class="xl" style="left:178px">24</div>
<div class="xl" style="left:209px">31</div>
<div class="xl" style="left:240px">07</div>
<div class="xl" style="left:271px">14</div>
<div class="xl" style="left:302px">21</div>
<div class="xl" style="left:334px">28</div>
<div class="xl" style="left:365px">05</div>
<div class="xl" style="left:396px">12</div>
<div class="xl" style="left:427px">19</div>
<div class="xl" style="left:458px">26</div>
<div class="xl" style="left:489px">02</div>
<div class="xl" style="left:520px">09</div>
<div class="xl" style="left:551px">16</div>
<div class="xl" style="left:583px">23</div>
<div class="xl" style="left:613px">30</div>
<div class="xl" style="left:644px">07</div>
<div class="xl" style="left:675px">14</div>
<div class="xl" style="left:706px">21</div>
<div class="xl" style="left:738px">28</div>
<div class="xl" style="left:769px">04</div>
<div class="xl" style="left:800px">11</div>
<div class="xl" style="left:831px">18</div>
<div class="xl" style="left:866px">25</div>
<div class="xl" style="left:928px">08</div>
<div class="xl2" style="left:3px">Feb/17/14</div>
<div class="xl2" style="left:65px">Mar/03</div>
<div class="xl2" style="left:220px">Apr/07</div>
<div class="xl2" style="left:345px">May/05</div>
<div class="xl2" style="left:469px">Jun/02</div>
<div class="xl2" style="left:624px">Jul/07</div>
<div class="xl2" style="left:749px">Aug/04</div>
<div class="xl2" style="left:908px">Sep/08</div>
<div class="abs" style="left:983px;top:475px;width:43px;height:11px;border:1px solid #c04040;"></div>
<div class="abs" style="left:985px;top:475px;font-size:11px;line-height:14px;color:#2020a0;">1.66202</div>
<div class="abs" style="left:51px;top:692px;font-size:11px;line-height:13px;color:#707070;white-space:nowrap;">Search for instrument</div>
<div class="abs" style="left:202px;top:692px;font-size:11.75px;line-height:14px;font-weight:bold;color:#141414;white-space:nowrap;">18 Aug 2014 20:00:00 EDT</div>
</body></html>
